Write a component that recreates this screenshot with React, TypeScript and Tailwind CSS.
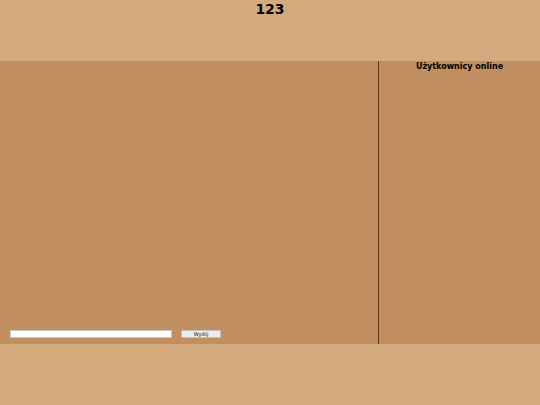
export default function App() {
  return (
    <div className="w-[540px] h-[405px] flex flex-col bg-[#d2aa7e] font-['DejaVu_Sans',sans-serif] text-black">
      <div className="h-[61px] flex justify-center">
        <h1 className="text-[14px] font-bold leading-none mt-[2px]">123</h1>
      </div>
      <div className="h-[283px] flex bg-[#c18f5f]">
        <div className="w-[378px] flex flex-col justify-end pb-[6px] pl-[10px]">
          <div className="flex items-center gap-[9px]">
            <input type="text" className="w-[162px] h-[8px] bg-white border border-[#c8c8c8] outline-none" />
            <button className="w-[40px] h-[8px] bg-[#ececec] border border-[#c0c0c0] text-[5px] leading-none flex items-center justify-center">Wyślij</button>
          </div>
        </div>
        <div className="flex-1 border-l border-[#5a3818] flex flex-col items-center">
          <div className="text-[8px] font-bold leading-none mt-[2px]">Użytkownicy online</div>
        </div>
      </div>
      <div className="flex-1" />
    </div>
  );
}
